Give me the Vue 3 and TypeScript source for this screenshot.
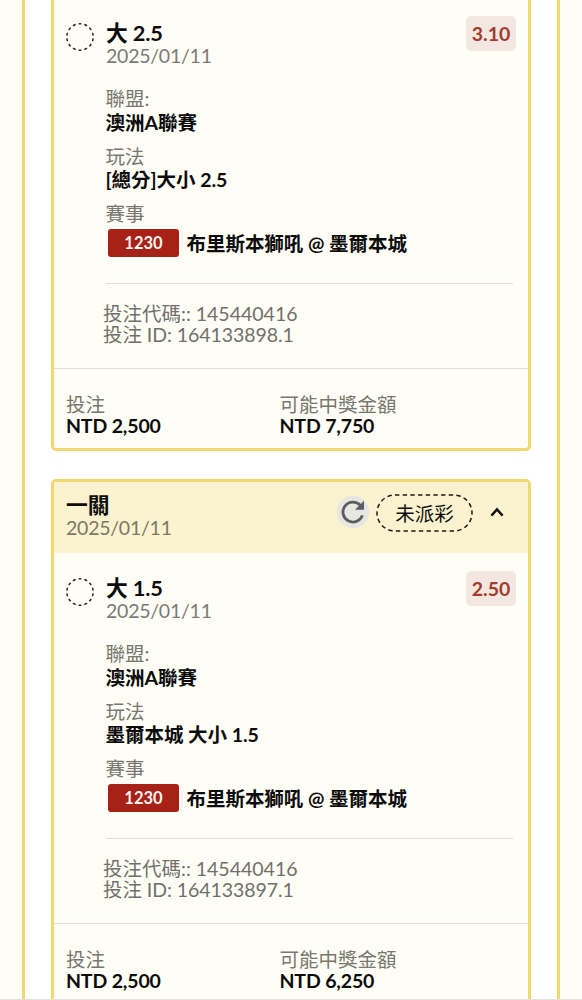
<script setup lang="ts">
interface Bet {
  id: number
  header?: { title: string; date: string; status: string }
  pick: string
  odds: string
  date: string
  details: { label: string; value: string }[]
  matchCode: string
  match: string
  code: string
  betId: string
  stake: string
  payout: string
}

const bets: Bet[] = [
  {
    id: 1,
    pick: '大 2.5',
    odds: '3.10',
    date: '2025/01/11',
    details: [
      { label: '聯盟:', value: '澳洲A聯賽' },
      { label: '玩法', value: '[總分]大小 2.5' },
    ],
    matchCode: '1230',
    match: '布里斯本獅吼 @ 墨爾本城',
    code: '145440416',
    betId: '164133898.1',
    stake: 'NTD 2,500',
    payout: 'NTD 7,750',
  },
  {
    id: 2,
    header: { title: '一關', date: '2025/01/11', status: '未派彩' },
    pick: '大 1.5',
    odds: '2.50',
    date: '2025/01/11',
    details: [
      { label: '聯盟:', value: '澳洲A聯賽' },
      { label: '玩法', value: '墨爾本城 大小 1.5' },
    ],
    matchCode: '1230',
    match: '布里斯本獅吼 @ 墨爾本城',
    code: '145440416',
    betId: '164133897.1',
    stake: 'NTD 2,500',
    payout: 'NTD 6,250',
  },
]
</script>

<template>
  <main class="page">
    <div class="list">
      <article v-for="bet in bets" :key="bet.id" class="card" :class="{ continued: !bet.header }">
        <header v-if="bet.header" class="head">
          <div class="head-text">
            <div class="title">{{ bet.header.title }}</div>
            <div class="date">{{ bet.header.date }}</div>
          </div>
          <svg class="refresh" viewBox="0 0 34 34">
            <circle cx="17" cy="17" r="16.3" fill="#e6e6e3" />
            <path d="M26.4 20.4A10 10 0 1 1 24.4 10.4" fill="none" stroke="#5d5d61" stroke-width="2.8" />
            <path d="M28 5.8V14.8H19Z" fill="#5d5d61" />
          </svg>
          <div class="status">
            <svg class="outline" viewBox="0 0 97 38">
              <rect x="1" y="1" width="95" height="36" rx="18" pathLength="210" />
            </svg>
            <span>{{ bet.header.status }}</span>
          </div>
          <svg class="chevron" viewBox="0 0 14 10">
            <path d="M1.4 8.6L7 2.4L12.6 8.6" fill="none" stroke="#111" stroke-width="2.4" />
          </svg>
        </header>

        <section class="body">
          <div class="pick-row">
            <svg class="ring" viewBox="0 0 28 28">
              <circle cx="14" cy="14" r="13.2" pathLength="140" />
            </svg>
            <div class="pick">
              <div class="title">{{ bet.pick }}</div>
              <div class="date">{{ bet.date }}</div>
            </div>
            <div class="odds">{{ bet.odds }}</div>
          </div>
          <div class="details">
            <div v-for="d in bet.details" :key="d.label" class="detail">
              <div class="label">{{ d.label }}</div>
              <div class="value">{{ d.value }}</div>
            </div>
            <div class="label">賽事</div>
            <div class="match">
              <span class="tag">{{ bet.matchCode }}</span>
              <span class="value">{{ bet.match }}</span>
            </div>
          </div>
          <div class="ids">
            <div>投注代碼:: {{ bet.code }}</div>
            <div class="bet-id">投注 ID: {{ bet.betId }}</div>
          </div>
        </section>

        <footer class="foot">
          <div>
            <div class="muted">投注</div>
            <div class="amount">{{ bet.stake }}</div>
          </div>
          <div>
            <div class="muted">可能中獎金額</div>
            <div class="amount">{{ bet.payout }}</div>
          </div>
        </footer>
      </article>
    </div>
    <div class="bottom-line"></div>
  </main>
</template>

<style>
body {
  margin: 0;
}
</style>

<style scoped>
* {
  box-sizing: border-box;
}
.page {
  height: 1000px;
  overflow: hidden;
  position: relative;
  padding: 0 22px;
  background: #fffef6;
  font-family: Lato, "Noto Sans CJK TC", sans-serif;
  font-size: 19.5px;
  color: #0c0c0c;
  white-space: nowrap;
}
.list {
  height: 1010px;
  padding: 0 26px;
  background: #fff;
  border: solid #f1d972;
  border-width: 0 3px;
}
.card {
  border: 3px solid #f1d972;
  border-radius: 5px;
  background: #fffef6;
  margin-bottom: 28px;
  overflow: hidden;
}
.continued {
  border-top: 0;
  border-radius: 0 0 5px 5px;
  height: 451px;
}
.continued .body {
  margin-top: -2px;
}
.head {
  display: flex;
  align-items: flex-start;
  height: 71px;
  padding: 11px 24px 0 12px;
  background: #fbf3d0;
}
.head-text {
  flex: 1;
}
.title {
  font-size: 21.8px;
  line-height: 24px;
  letter-spacing: -0.15px;
  font-weight: 700;
}
.date {
  line-height: 22px;
  letter-spacing: -0.24px;
  color: #7b7b76;
}
.head .date {
  color: #7d7862;
}
.refresh {
  width: 34px;
  height: 34px;
  margin-top: 2px;
}
.status {
  position: relative;
  width: 97px;
  height: 38px;
  margin: 1px 0 0 6px;
  display: flex;
  align-items: center;
  justify-content: center;
  line-height: 22px;
  padding-top: 2px;
}
.outline {
  position: absolute;
  inset: 0;
}
.outline rect {
  fill: none;
  stroke: #1d1b12;
  stroke-width: 1.5;
  stroke-dasharray: 4 3;
}
.chevron {
  width: 14px;
  height: 10px;
  margin: 14px 0 0 17px;
}
.body {
  height: 370px;
  padding: 17px 12px 0;
}
.pick-row {
  display: flex;
  height: 72px;
}
.ring {
  width: 28px;
  height: 28px;
  margin: 8px 12px 0 0;
}
.ring circle {
  fill: none;
  stroke: #222;
  stroke-width: 1.5;
  stroke-dasharray: 5 5;
  stroke-dashoffset: -2.5;
}
.pick {
  flex: 1;
  padding-top: 6px;
}
.odds {
  width: 50px;
  height: 35px;
  margin-top: 1px;
  border-radius: 5px;
  background: #f4e7e1;
  color: #a23c2e;
  font-weight: 700;
  line-height: 35px;
  text-align: center;
}
.details {
  margin: 0 3px 0 40px;
  height: 197px;
  border-bottom: 1px solid #deded8;
}
.detail {
  height: 57.5px;
}
.label {
  line-height: 23.5px;
  margin-left: -0.5px;
  color: #77776f;
}
.value {
  line-height: 23.5px;
  margin-left: -0.5px;
  letter-spacing: -0.04px;
  font-weight: 700;
}
.match {
  display: flex;
  align-items: center;
  height: 28px;
  margin: 3px 0 0 2px;
}
.match .value {
  padding-top: 2px;
}
.tag {
  width: 71px;
  height: 28px;
  margin-right: 8px;
  border-radius: 3px;
  background: #a62117;
  color: #fdf3ee;
  font-size: 16.5px;
  font-weight: 700;
  line-height: 29px;
  text-align: center;
}
.ids {
  padding: 19px 0 0 37px;
  line-height: 21px;
  color: #70706b;
}
.bet-id {
  letter-spacing: -0.06px;
}
.foot {
  display: flex;
  height: 80px;
  padding: 25px 12px 0;
  border-top: 1px solid #deded8;
  line-height: 21px;
}
.foot > div:first-child {
  width: 213.5px;
}
.muted {
  color: #77776f;
}
.amount {
  font-weight: 700;
  letter-spacing: -0.15px;
}
.bottom-line {
  position: absolute;
  left: 0;
  right: 0;
  bottom: 0;
  height: 1px;
  background: #e2e2df;
}
</style>
